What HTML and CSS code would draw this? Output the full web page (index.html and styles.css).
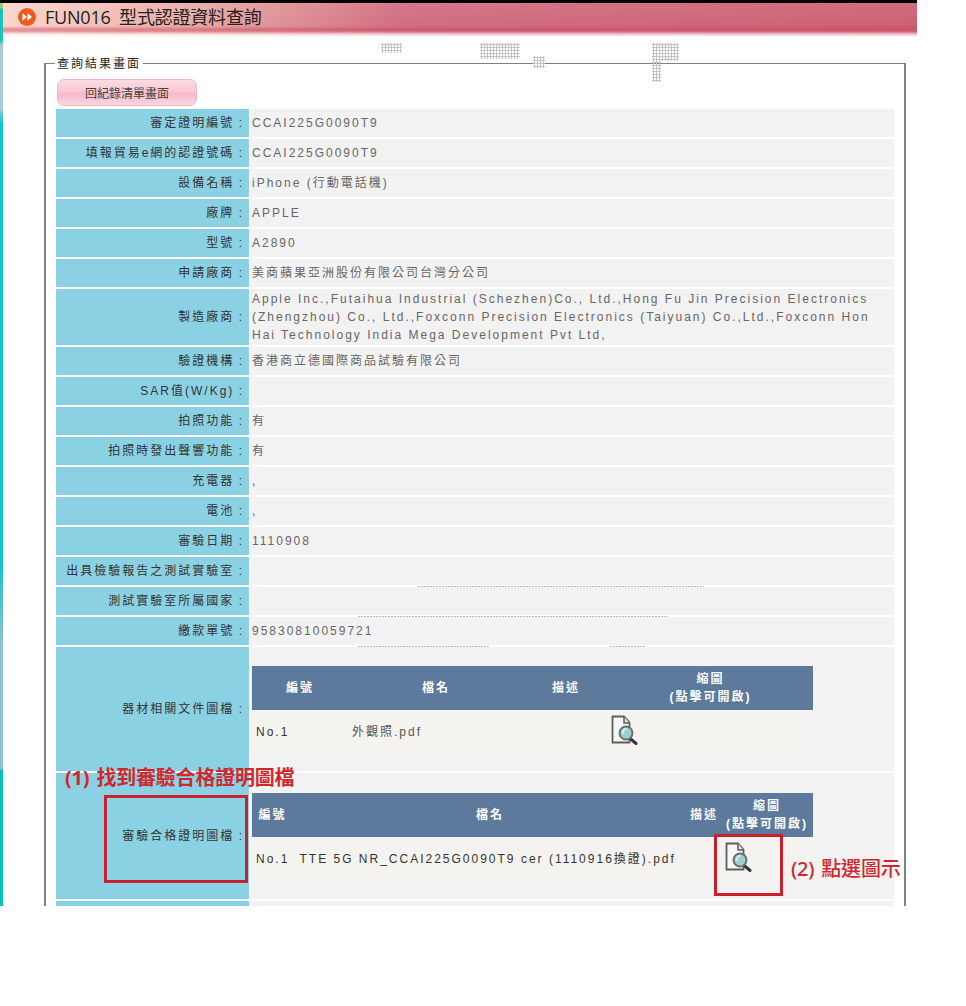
FILE: index.html
```html
<!DOCTYPE html>
<html lang="zh-Hant">
<head>
<meta charset="utf-8">
<title>FUN016 型式認證資料查詢</title>
<link rel="stylesheet" href="styles.css">
</head>
<body>
<div class="page">
  <div class="stripe"></div>
  <main class="main">
    <header class="banner">
      <svg class="play" width="18" height="18" viewBox="0 0 18 18"><circle cx="9" cy="9" r="9" fill="#ee5a1c"/><path d="M4.5 5.2 9 9l-4.500 3.800zM9.500 5.200 14 9l-4.500 3.800z" fill="#fff"/></svg>
      <h1 class="title">FUN016 型式認證資料查詢</h1>
    </header>
    <fieldset class="panel">
      <legend class="legend">查詢結果畫面</legend>
      <button class="back" type="button">回紀錄清單畫面</button>
      <div class="rows">
        <div class="row"><div class="k">審定證明編號 :</div><div class="v">CCAI225G0090T9</div></div>
        <div class="row"><div class="k">填報貿易e網的認證號碼 :</div><div class="v">CCAI225G0090T9</div></div>
        <div class="row"><div class="k">設備名稱 :</div><div class="v">iPhone (行動電話機)</div></div>
        <div class="row"><div class="k">廠牌 :</div><div class="v">APPLE</div></div>
        <div class="row"><div class="k">型號 :</div><div class="v">A2890</div></div>
        <div class="row"><div class="k">申請廠商 :</div><div class="v">美商蘋果亞洲股份有限公司台灣分公司</div></div>
        <div class="row"><div class="k">製造廠商 :</div><div class="v">Apple Inc.,Futaihua Industrial (Schezhen)Co., Ltd.,Hong Fu Jin Precision Electronics (Zhengzhou) Co., Ltd.,Foxconn Precision Electronics (Taiyuan) Co.,Ltd.,Foxconn Hon Hai Technology India Mega Development Pvt Ltd,</div></div>
        <div class="row"><div class="k">驗證機構 :</div><div class="v">香港商立德國際商品試驗有限公司</div></div>
        <div class="row"><div class="k">SAR值(W/Kg) :</div><div class="v"></div></div>
        <div class="row"><div class="k">拍照功能 :</div><div class="v">有</div></div>
        <div class="row"><div class="k">拍照時發出聲響功能 :</div><div class="v">有</div></div>
        <div class="row"><div class="k">充電器 :</div><div class="v">,</div></div>
        <div class="row"><div class="k">電池 :</div><div class="v">,</div></div>
        <div class="row"><div class="k">審驗日期 :</div><div class="v">1110908</div></div>
        <div class="row"><div class="k">出具檢驗報告之測試實驗室 :</div><div class="v"></div></div>
        <div class="row"><div class="k">測試實驗室所屬國家 :</div><div class="v"></div></div>
        <div class="row"><div class="k">繳款單號 :</div><div class="v">95830810059721</div></div>
        <div class="row row-docs"><div class="k">器材相關文件圖檔 :</div><div class="v v-docs">
          <table class="files files-a">
            <thead><tr><th class="a1">編號</th><th class="a2">檔名</th><th class="a3">描述</th><th class="a4">縮圖<br>(點擊可開啟)</th></tr></thead>
            <tbody><tr><td>No.1</td><td class="a-name">外觀照.pdf</td><td></td><td><svg class="doc doc-a" width="28" height="30" viewBox="0 0 28 30"><use href="#docicon"/></svg></td></tr></tbody>
          </table>
        </div></div>
        <div class="row row-cert"><div class="k">審驗合格證明圖檔 :</div><div class="v v-docs v-cert">
          <table class="files files-b">
            <thead><tr><th class="b1">編號</th><th class="b2">檔名</th><th class="b3">描述</th><th class="b4">縮圖<br>(點擊可開啟)</th></tr></thead>
            <tbody><tr><td colspan="3"><span class="no">No.1</span> TTE 5G NR_CCAI225G0090T9 cer (1110916換證).pdf</td><td><svg class="doc doc-b" width="28" height="30" viewBox="0 0 28 30"><use href="#docicon"/></svg></td></tr></tbody>
          </table>
        </div></div>
        <div class="row"><div class="k"></div><div class="v"></div></div>
      </div>
    </fieldset>
    <div class="dots d1"></div><div class="dots d2"></div><div class="dots d3"></div><div class="dots d4"></div><div class="dots d5"></div>
    <div class="dotline l1"></div><div class="dotline l2"></div><div class="dotline l3"></div><div class="dotline l4"></div>
    <div class="note note-1">(1) 找到審驗合格證明圖檔</div>
    <div class="mark mark-1"></div>
    <div class="mark mark-2"></div>
    <div class="note note-2">(2) 點選圖示</div>
  </main>
</div>
<svg class="defs" width="0" height="0"><defs>
  <g id="docicon">
    <path d="M1.500 1.500H13L18.500 7.500V27.500H1.500Z" fill="#f7f7f5" stroke="#5d5f5c" stroke-width="1.800"/>
    <path d="M13 1.500V8H18.500" fill="#e4e4e2" stroke="#5d5f5c" stroke-width="1.500"/>
    <path d="M18.500 23 25 28.500" stroke="#34383a" stroke-width="3" stroke-linecap="round"/>
    <circle cx="15" cy="18" r="6.500" fill="#9ccfd2" stroke="#6c7070" stroke-width="2"/>
    <path d="M12 19c-.5-3 1-5 3.500-5.500" fill="none" stroke="#dff5f5" stroke-width="1.500"/>
  </g>
</defs></svg>
</body>
</html>
```
FILE: styles.css
```css
* { box-sizing: border-box; }
html, body { margin: 0; padding: 0; background: #fff; }
body { font-family: "Liberation Sans", "Noto Sans CJK TC", sans-serif; font-size: 12px; }
.defs { position: absolute; }
.page { display: flex; width: 917px; height: 906px; overflow: hidden; position: relative; background: #fff; }
.stripe { flex: 0 0 3px; border-top: 3px solid #000;
  background: linear-gradient(#9cc96f 0, #9cc96f 5px, #1fc0b8 6px, #1fc0b8 37px, #a9cdd8 42px, #a9cdd8 105px, #12c3c8 120px, #12c3c8 560px, #8fc0d8 640px, #8fc0d8 765px, #06c0b4 768px, #05c0b4 906px); }
.main { flex: 1; position: relative; min-width: 0; }
.banner { height: 37px; margin-bottom: 18px; border-top: 3px solid #000; display: flex; align-items: center; gap: 9px; padding: 0 0 7px 15px;
  background:
    linear-gradient(to bottom, rgba(255,255,255,.08) 0, rgba(255,255,255,0) 23px, rgba(203,70,100,.45) 26px, rgba(203,70,100,.45) 28px, rgba(255,255,255,.6) 31px, #fff 34px),
    linear-gradient(to right, #fbd6cb 0, #eaaaa4 190px, #d06d80 400px, #cd5f73 100%); }
.play { flex: none; }
.title { margin: 0; font: 400 18px/1 "Open Sans", "Noto Sans CJK TC", sans-serif; letter-spacing: -.2px; word-spacing: 4px; color: #222; white-space: nowrap; }
.panel { margin: 0 11px 0 41px; padding: 0 10px; border: solid #808080; border-width: 1px 2px 2px 2px; min-width: 0; width: 862px; }
.legend { margin-left: -1px; padding: 2px 2px 0 2px; font-size: 12px; letter-spacing: 2px; line-height: 14px; color: #222; }
.back { display: block; width: 140px; height: 27px; margin: 8px 0 3px 1px; border: 1px solid #f2b6c4; border-radius: 7px; padding: 0; font: 12px "Liberation Sans", "Noto Sans CJK TC", sans-serif; color: #444;
  background: linear-gradient(#fbdbe2 0, #f9c9d4 45%, #f6b9c8 55%, #fad7df 100%); }
.rows { display: flex; flex-direction: column; gap: 2px; letter-spacing: 2px; }
.row { display: grid; grid-template-columns: 193px 644px; column-gap: 1px; min-height: 28px; }
.k { background: #8bd1e4; color: #333; padding: 0 5px 3px 0; word-spacing: -1px; display: flex; align-items: center; justify-content: flex-end; }
.v { background: #f2f2f2; color: #666; padding: 1px 20px 1px 2px; line-height: 18px; display: flex; align-items: center; }
.v-docs { display: block; padding: 19px 0 0 2px; }
.v-cert { padding-top: 20px; }
.row-docs { height: 124px; }
.row-cert { height: 126px; }
.files { border-collapse: collapse; width: 561px; table-layout: fixed; letter-spacing: 2px; }
.files th { background: #5d7a9d; color: #fff; height: 44px; font-size: 12px; font-weight: 700; line-height: 18px; padding: 0; text-align: center; }
.files td { background: #f5f3f0; height: 43px; padding: 0 0 0 4px; color: #333; white-space: nowrap; vertical-align: middle; }
.a1 { width: 96px; } .a2 { width: 176px; } .a3 { width: 84px; } .a4 { width: 205px; }
.files .a-name { padding-left: 4px; color: #555; }
.b1 { width: 41px; } .b2 { width: 394px; } .b3 { width: 34px; } .b4 { width: 92px; }
.no { margin-right: 5px; }
.doc { display: block; }
.doc-a { margin: -3px 0 0 -1px; }
.doc-b { margin: -4px 0 0 0; }
.note { position: absolute; color: #d0272f; font: 700 20px/24px "Noto Sans", "Noto Sans CJK TC", sans-serif; letter-spacing: -.2px; word-spacing: 2px; white-space: nowrap; }
.note-1 { left: 62px; top: 766px; }
.note-2 { left: 788px; top: 857px; font-weight: 500; }
.mark { position: absolute; border: 3px solid #c8202c; }
.mark-1 { left: 101px; top: 795px; width: 144px; height: 88px; }
.mark-2 { left: 711px; top: 834px; width: 69px; height: 62px; }
.dots { position: absolute; background: radial-gradient(circle, #c4c4c4 0 1px, transparent 1.200px) 0 0 / 3px 3px; }
.d1 { left: 378px; top: 43px; width: 21px; height: 10px; }
.d2 { left: 477px; top: 43px; width: 40px; height: 16px; }
.d3 { left: 530px; top: 56px; width: 12px; height: 12px; }
.d4 { left: 649px; top: 43px; width: 27px; height: 18px; }
.d5 { left: 649px; top: 61px; width: 9px; height: 21px; }
.dotline { position: absolute; height: 1px; background: repeating-linear-gradient(to right, #bbb 0 2px, transparent 2px 3px); }
.l1 { left: 415px; top: 586px; width: 286px; }
.l2 { left: 355px; top: 616px; width: 310px; }
.l3 { left: 355px; top: 646px; width: 132px; }
.l4 { left: 607px; top: 646px; width: 36px; }
```
